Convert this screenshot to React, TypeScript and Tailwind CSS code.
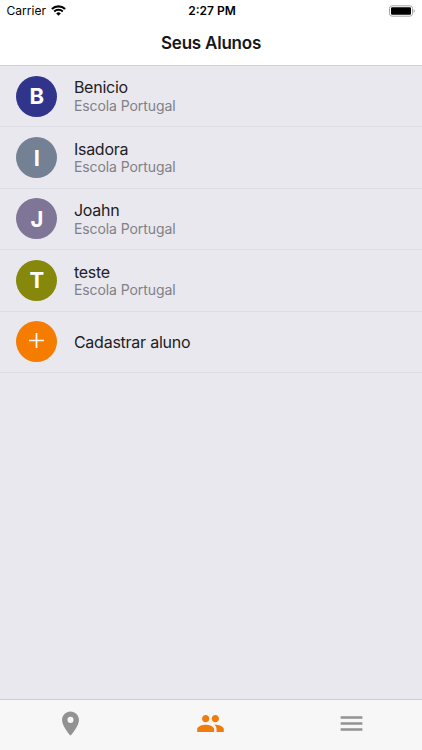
import React from 'react';
import { MdMenu, MdPeople, MdPlace } from 'react-icons/md';

interface Student {
  name: string;
  school: string;
  color: string;
}

const students: Student[] = [
  { name: 'Benicio', school: 'Escola Portugal', color: 'bg-[#31348b]' },
  { name: 'Isadora', school: 'Escola Portugal', color: 'bg-[#748094]' },
  { name: 'Joahn', school: 'Escola Portugal', color: 'bg-[#7f7596]' },
  { name: 'teste', school: 'Escola Portugal', color: 'bg-[#85880b]' },
];

const StatusBar = () => (
  <div className="grid h-[22px] grid-cols-3 items-center px-[6.5px] text-[12px] leading-[22px] text-black">
    <div className="flex items-center gap-[5px]">
      <span className="tracking-[0.05px]">Carrier</span>
      <svg className="-mt-px" width="15" height="11" viewBox="0 0 15 11" fill="none" stroke="#000" aria-label="Wi-Fi">
        <path d="M0.9 4.1a9.4 9.4 0 0 1 13.2 0" strokeWidth="2.1" />
        <path d="M3.2 6.5a6.1 6.1 0 0 1 8.6 0" strokeWidth="1.9" />
        <path d="M7.5 10.7 5.2 8.4a3.3 3.3 0 0 1 4.6 0z" fill="#000" stroke="none" />
      </svg>
    </div>
    <span className="pl-0.5 text-center font-semibold">2:27 PM</span>
    <svg className="-mt-px justify-self-end" width="27" height="12" viewBox="0 0 27 12" aria-label="Bateria">
      <rect x="1.5" y="0.8" width="23" height="10.4" rx="2.6" fill="#fff" stroke="#a5a5a5" />
      <rect x="3" y="2.3" width="20" height="7.4" rx="1.2" fill="#000" />
      <path d="M25.6 4.2v3.6c.7-.3 1.2-1 1.2-1.8s-.5-1.5-1.2-1.8z" fill="#a5a5a5" />
    </svg>
  </div>
);

const Avatar: React.FC<{ color: string; children: React.ReactNode }> = ({ color, children }) => (
  <div
    className={`flex h-[41px] w-[41px] shrink-0 items-center justify-center rounded-full text-[22px] font-bold leading-none text-white ${color}`}
  >
    {children}
  </div>
);

const StudentRow: React.FC<{ student: Student }> = ({ student }) => (
  <li className="flex h-[61.4px] items-center gap-[16.5px] border-b border-[#dedde3] pl-[16.4px]">
    <Avatar color={student.color}>{student.name.charAt(0).toUpperCase()}</Avatar>
    <div className="pt-[0.8px]">
      <div className="text-[16px] leading-[18px] tracking-[-0.25px] text-[#212124]">{student.name}</div>
      <div className="pt-[0.5px] text-[14px] leading-[18px] tracking-[-0.08px] text-[#818186]">{student.school}</div>
    </div>
  </li>
);

export default function App() {
  return (
    <div className="flex h-[750px] w-full flex-col bg-[#e9e8ee] font-['Inter','Liberation_Sans',sans-serif]">
      <header className="h-[66px] shrink-0 border-b border-[#cfced6] bg-white">
        <StatusBar />
        <h1 className="text-center text-[17px] font-semibold leading-[42px] tracking-[-0.22px] text-[#161616]">
          Seus Alunos
        </h1>
      </header>

      <main className="flex-1">
        <ul>
          {students.map((student) => (
            <StudentRow key={student.name} student={student} />
          ))}
          <li className="flex h-[61.4px] items-center gap-[16.5px] border-b border-[#dedde3] pl-[16.4px]">
            <Avatar color="bg-[#f67c00]">
              <svg className="-mt-[3px]" width="15" height="15" viewBox="0 0 15 15" stroke="#fff" strokeWidth="1.7">
                <path d="M7.5 0v15M0 7.5h15" />
              </svg>
            </Avatar>
            <span className="text-[16px] tracking-[-0.24px] text-[#212124]">Cadastrar aluno</span>
          </li>
        </ul>
      </main>

      <nav className="grid h-[51px] shrink-0 grid-cols-3 items-center justify-items-center border-t border-[#cfced6] bg-[#f7f7f7] pb-[3px] text-[#929292]">
        <button aria-label="Mapa">
          <MdPlace size={29} />
        </button>
        <button className="text-[#f17c0e]" aria-label="Alunos">
          <MdPeople size={29} />
        </button>
        <button aria-label="Menu">
          <MdMenu size={29} />
        </button>
      </nav>
    </div>
  );
}
